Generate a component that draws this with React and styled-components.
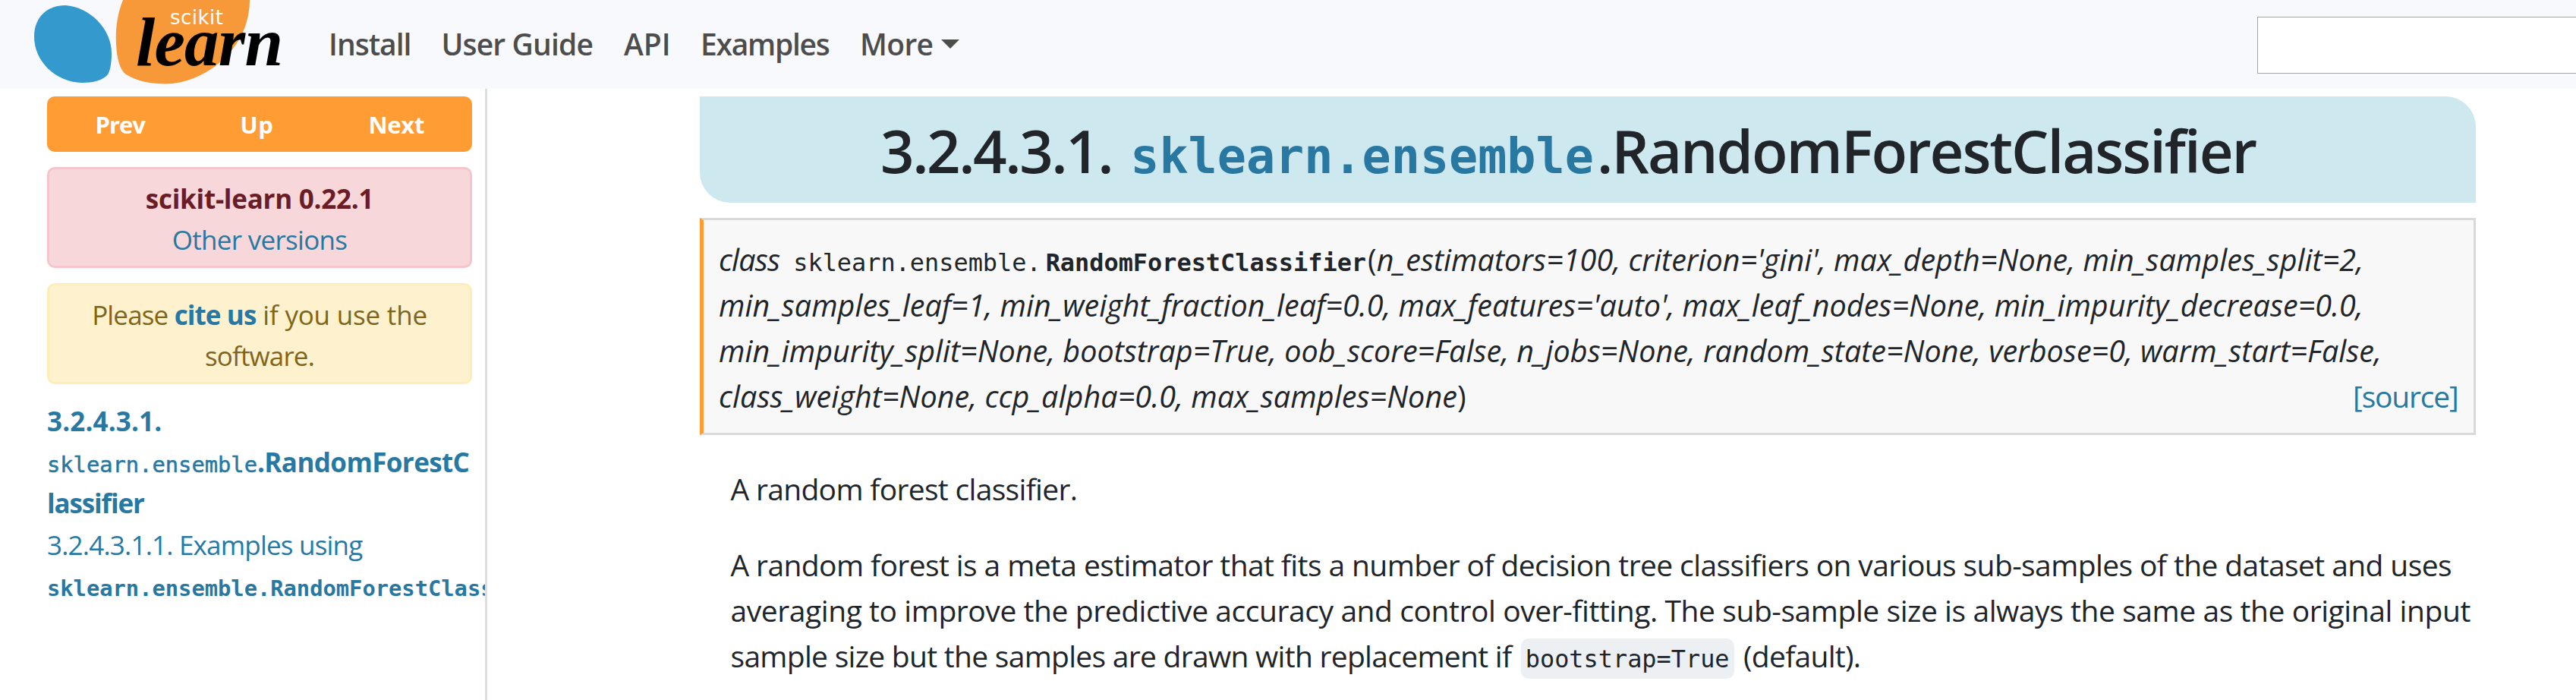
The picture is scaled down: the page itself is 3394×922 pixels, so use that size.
import React from 'react';
import styled, { createGlobalStyle } from 'styled-components';

const color = {
  text: '#212529',
  link: '#2878a2',
  orange: '#ff9c34',
  nav: '#4d4d4d',
};
const mono = '"DejaVu Sans Mono", monospace';

const GlobalStyle = createGlobalStyle`
  *, *::before, *::after { box-sizing: border-box; }
  html, body { margin: 0; padding: 0; background: #fff; overflow: hidden; }
  body {
    color: ${color.text};
    font-family: "Open Sans", "Noto Sans", sans-serif;
    font-size: 39px;
    line-height: 60px;
  }
  p { margin: 0; }
  a { color: ${color.link}; text-decoration: none; }
`;

const Page = styled.div`
  display: flex;
  flex-direction: column;
  width: 100%;
  height: 922px;
  overflow: hidden;
`;

/* header */
const Header = styled.header`
  display: flex;
  flex: none;
  align-items: center;
  height: 117px;
  background: #f8f9fc;
  overflow: hidden;
`;
const Logo = styled.svg`
  flex: none;
  width: 433px;
  height: 117px;
`;
const Nav = styled.nav`
  display: grid;
  grid-template-columns: 148.4px 240.7px 101px 210px auto;
  align-items: center;
  padding-bottom: 1px;
`;
const NavLink = styled.a`
  display: flex;
  align-items: center;
  color: ${color.nav};
  font-weight: 600;
  white-space: nowrap;
  letter-spacing: ${(p) => p.$ls || 0}px;
`;
const Caret = styled.span`
  margin: 0 0 0 11px;
  border: 12px solid transparent;
  border-top-color: ${color.nav};
  border-bottom: 0;
`;
const Search = styled.input`
  flex: none;
  width: 480px;
  height: 75px;
  margin: 2px -60px 0 auto;
  border: 1px solid #a3a4a6;
  background: #fff;
`;

/* sidebar */
const Body = styled.div`
  display: flex;
  flex: 1;
  min-height: 0;
`;
const Sidebar = styled.aside`
  flex: none;
  width: 642px;
  padding: 10px 0 0 62px;
  border-right: 3px solid #dddee0;
  overflow: hidden;
  font-size: 35px;
  line-height: 54px;
`;
const Pager = styled.div`
  display: flex;
  justify-content: space-between;
  width: 560px;
  height: 73px;
  padding: 0 63px 0 63.5px;
  border-radius: 10px;
  background: ${color.orange};
  font-size: 31px;
  font-weight: 700;
  line-height: 75px;
`;
const PagerLink = styled.a`
  color: #fff;
  letter-spacing: ${(p) => p.$ls}px;
`;
const Alert = styled.div`
  width: 560px;
  height: 133px;
  margin-top: 20px;
  padding-top: 12px;
  border: 3px solid ${(p) => (p.$warning ? '#ffecb9' : '#f5c5cb')};
  border-radius: 10px;
  background: ${(p) => (p.$warning ? '#fef1ce' : '#f7d7da')};
  color: ${(p) => (p.$warning ? '#7f651a' : '#6c1c24')};
  text-align: center;
  white-space: nowrap;
`;
const Toc = styled.div`
  margin-top: 21.6px;
  color: ${color.link};
  line-height: 54.4px;
`;
const TocLine = styled.div`
  height: 54.4px;
  white-space: nowrap;
`;
const TocCode = styled.code`
  font: ${(p) => (p.$bold ? 700 : 400)} 28.75px/1 ${mono};
  -webkit-text-stroke: ${(p) => (p.$bold ? 0 : 0.5)}px ${color.link};
`;

/* inline run of text with its own tracking and weight */
const Run = styled.span`
  letter-spacing: ${(p) => p.$ls || 0}px;
  font-weight: ${(p) => (p.$bold ? 700 : 'inherit')};
`;

/* article */
const Article = styled.main`
  width: 2340px;
  margin-left: 280px;
  padding-top: 10px;
`;
const Title = styled.h1`
  height: 140px;
  margin: 0 0 20px;
  padding: 23px 0 0 238px;
  border-radius: 0 40px 0 40px;
  background: #cde8ef;
  font-size: 78px;
  font-weight: 600;
  line-height: 96px;
  white-space: nowrap;
`;
const TitleCode = styled.code`
  margin: 0 4px 0 24px;
  color: ${color.link};
  font: 700 63.4px/1 ${mono};
`;
const Signature = styled.div`
  height: 286px;
  padding: 21.5px 20.5px 0 20px;
  border: 3px solid #d9d9d9;
  border-left: 5px solid ${color.orange};
  background: #f8f8f8;
  font-size: 39.5px;
`;
const SigLine = styled.div`
  display: flex;
  align-items: baseline;
  height: 60px;
  font-style: italic;
  white-space: pre;
  letter-spacing: ${(p) => p.$ls || 0}px;
`;
const Upright = styled.span`
  font-style: normal;
`;
const SigModule = styled.code`
  margin: 0 6px 0 18px;
  font: 400 31.9px/60px ${mono};
  letter-spacing: 0;
`;
const SigName = styled(SigModule)`
  margin: 0 2px 0 0;
  font-weight: 700;
`;
const Source = styled.a`
  margin-left: auto;
  font-size: 39px;
  font-style: normal;
  letter-spacing: -1.2px;
`;
const Description = styled.div`
  padding: 41px 0 0 40.5px;
`;
const Paragraph = styled.p`
  margin-bottom: 40px;
`;
const Line = styled.span`
  display: block;
  height: 60px;
  white-space: nowrap;
  letter-spacing: ${(p) => p.$ls}px;
`;
const InlineCode = styled.code`
  margin: 0 3px 0 3px;
  padding: 8px 6px 7px;
  border-radius: 10px;
  background: #ecf0f3;
  font: 400 31.9px/1 ${mono};
  letter-spacing: 0;
`;

function ScikitLogo() {
  return (
    <Logo viewBox="0 0 433 117">
      <path
        fill="#3499cd"
        d="M45 48C45 22 63 7 86 7C118 9 147 38 147 70C147 84 145 93 142 98C136 106 122 109 108 109C72 108 45 80 45 48Z"
      />
      <path
        fill="#f89939"
        d="M162 0C154 20 152 40 153 58C154 78 158 92 166 98C180 107 200 110.5 218 110.5C270 110 329 65 329 0Z"
      />
      <text x="224" y="32" fill="#fff" fontFamily="DejaVu Sans" fontSize="26" textLength="70">
        scikit
      </text>
      <text
        x="179"
        y="86"
        fill="#000"
        fontFamily="Liberation Serif"
        fontSize="91"
        fontStyle="italic"
        fontWeight="700"
        textLength="194"
      >
        learn
      </text>
    </Logo>
  );
}

export default function App() {
  return (
    <Page>
      <GlobalStyle />
      <Header>
        <ScikitLogo />
        <Nav>
          <NavLink $ls={-1}>Install</NavLink>
          <NavLink $ls={-0.84}>User Guide</NavLink>
          <NavLink>API</NavLink>
          <NavLink $ls={-1.29}>Examples</NavLink>
          <NavLink $ls={-0.7}>
            More
            <Caret />
          </NavLink>
        </Nav>
        <Search aria-label="Search" />
      </Header>
      <Body>
        <Sidebar>
          <Pager>
            <PagerLink $ls={-1}>Prev</PagerLink>
            <PagerLink $ls={0.5}>Up</PagerLink>
            <PagerLink $ls={-0.35}>Next</PagerLink>
          </Pager>
          <Alert>
            <Run as="div" $bold $ls={-0.27}>scikit-learn 0.22.1</Run>
            <Run as="a" $ls={-0.69}>Other versions</Run>
          </Alert>
          <Alert $warning>
            <Run $ls={-0.84}>Please </Run>
            <Run as="a" $bold $ls={-0.9}>cite us</Run>
            <Run $ls={-0.2}> if you use the</Run>
            <br />
            <Run $ls={-0.86}>software.</Run>
          </Alert>
          <Toc>
            <TocLine><Run $bold $ls={0.13}>3.2.4.3.1.</Run></TocLine>
            <TocLine>
              <TocCode>sklearn.ensemble</TocCode>
              <Run $bold $ls={-0.6}>.RandomForestC</Run>
            </TocLine>
            <TocLine><Run $bold $ls={-1.14}>lassifier</Run></TocLine>
            <TocLine><Run $ls={-0.8}>3.2.4.3.1.1. Examples using</Run></TocLine>
            <TocLine><TocCode $bold>sklearn.ensemble.RandomForestClassifier</TocCode></TocLine>
          </Toc>
        </Sidebar>
        <Article>
          <Title>
            <Run $ls={-2.46}>3.2.4.3.1.</Run>
            <TitleCode>sklearn.ensemble</TitleCode>
            <Run $ls={-2.07}>.RandomForestClassifier</Run>
          </Title>
          <Signature>
            <SigLine $ls={0.06}>
              <Run $ls={-0.8}>class</Run>
              <SigModule>sklearn.ensemble.</SigModule>
              <SigName>RandomForestClassifier</SigName>
              <Upright>(</Upright>
              {"n_estimators=100, criterion='gini', max_depth=None, min_samples_split=2,"}
            </SigLine>
            <SigLine $ls={0.02}>
              {"min_samples_leaf=1, min_weight_fraction_leaf=0.0, max_features='auto', max_leaf_nodes=None, min_impurity_decrease=0.0,"}
            </SigLine>
            <SigLine $ls={0.02}>
              min_impurity_split=None, bootstrap=True, oob_score=False, n_jobs=None, random_state=None, verbose=0, warm_start=False,
            </SigLine>
            <SigLine $ls={0.08}>
              class_weight=None, ccp_alpha=0.0, max_samples=None<Upright>)</Upright>
              <Source>[source]</Source>
            </SigLine>
          </Signature>
          <Description>
            <Paragraph>
              <Line $ls={-0.68}>A random forest classifier.</Line>
            </Paragraph>
            <Paragraph>
              <Line $ls={-0.6}>
                A random forest is a meta estimator that fits a number of decision tree classifiers on various sub-samples of the dataset and uses
              </Line>
              <Line $ls={-0.43}>
                averaging to improve the predictive accuracy and control over-fitting. The sub-sample size is always the same as the original input
              </Line>
              <Line $ls={-0.71}>
                sample size but the samples are drawn with replacement if <InlineCode>bootstrap=True</InlineCode> (default).
              </Line>
            </Paragraph>
          </Description>
        </Article>
      </Body>
    </Page>
  );
}
